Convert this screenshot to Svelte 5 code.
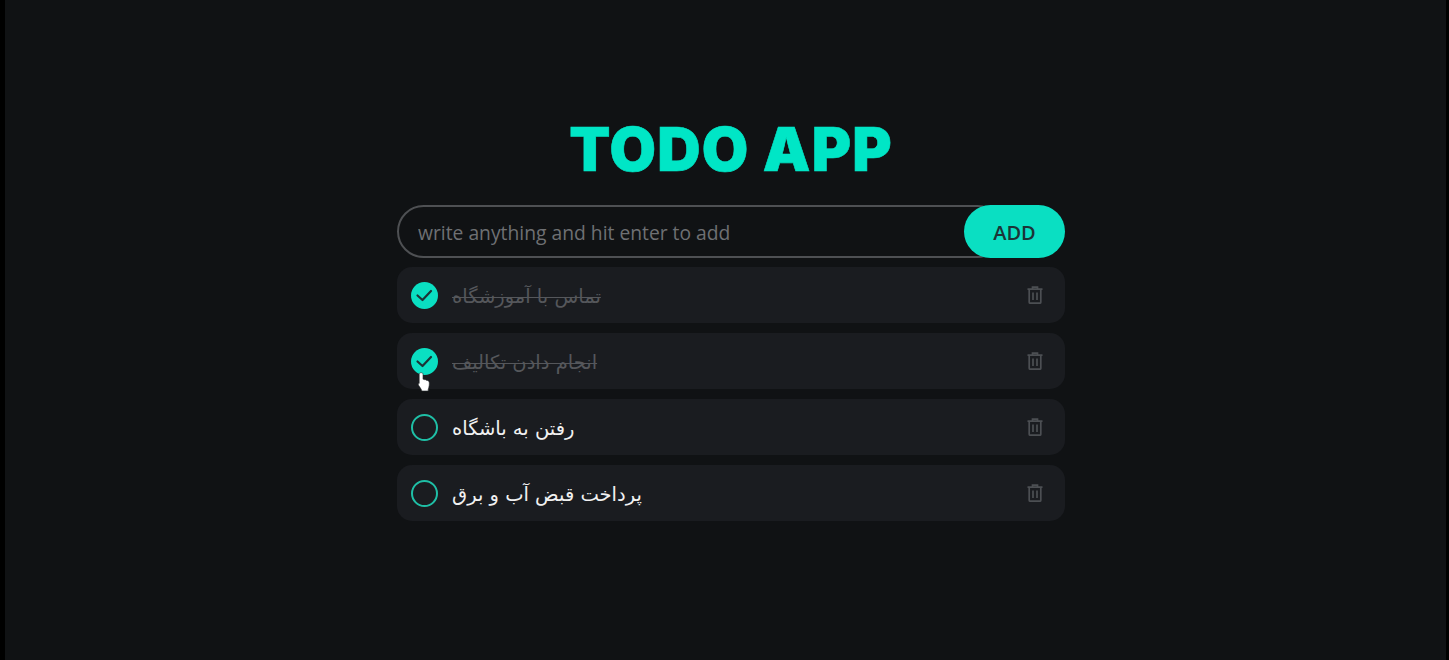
<script>
  let todos = $state([
    { id: 1, text: 'تماس با آموزشگاه', done: true },
    { id: 2, text: 'انجام دادن تکالیف', done: true },
    { id: 3, text: 'رفتن به باشگاه', done: false },
    { id: 4, text: 'پرداخت قبض آب و برق', done: false }
  ]);
  let draft = $state('');

  function add() {
    if (!draft.trim()) return;
    todos.push({ id: Date.now(), text: draft, done: false });
    draft = '';
  }
</script>

<div class="page">
  <main class="app">
    <h1>TODO APP</h1>
    <form class="add" onsubmit={(e) => { e.preventDefault(); add(); }}>
      <input placeholder="write anything and hit enter to add" bind:value={draft} />
      <button type="submit">ADD</button>
    </form>
    <ul>
      {#each todos as todo, i (todo.id)}
        <li class:done={todo.done}>
          <button class="check" aria-label="toggle" onclick={() => (todo.done = !todo.done)}>
            {#if todo.done}
              <svg viewBox="0 0 27 27" width="27" height="27">
                <path d="M6.500 13.500L11.500 18L20 9" fill="none" stroke="#1c3436" stroke-width="2.200" stroke-linecap="round" stroke-linejoin="round" />
              </svg>
            {/if}
            {#if i === 1}
              <svg class="cursor" viewBox="0 0 12 20" width="12" height="20">
                <path d="M1.200 2.200C1.200 .2 5 .2 5 2.200V7.200C5.800 7 6.400 7.200 6.800 7.800C7.500 7.500 8.300 7.800 8.700 8.500C9.700 8.300 11 9 11.200 10.200C11.500 12 11.200 14.500 10.200 17.500V19H3.800L3.300 17.500C2.600 15.900 1.300 14.800 .6 13.300C.1 12 .4 11.200 1.200 11.400Z" fill="#fff" stroke="#24282a" stroke-width=".6" />
              </svg>
            {/if}
          </button>
          <span class="text" dir="auto">{todo.text}</span>
          <button class="del" aria-label="delete" onclick={() => todos.splice(i, 1)}>
            <svg viewBox="0 0 16 18" width="16" height="18" fill="none" stroke="#4c4f53" stroke-width="1.700">
              <path d="M0.500 3.200H15.500M5.500 3V1.200H10.500V3M2.200 3.200V16.200C2.200 16.800 2.600 17.200 3.200 17.200H12.800C13.400 17.200 13.800 16.800 13.800 16.200V3.200" />
              <path d="M6 6.500V14M10 6.500V14" />
            </svg>
          </button>
        </li>
      {/each}
    </ul>
  </main>
</div>

<style>
  :global(body) {
    background: #000;
    font-family: "Open Sans", "Noto Sans", sans-serif;
  }
  .page {
    height: 660px;
    margin: 0 3px 0 5px;
    background: #101214;
    display: flex;
    justify-content: center;
    box-sizing: border-box;
    padding-left: 11px;
    overflow: hidden;
  }
  .app {
    width: 668px;
    padding-top: 111px;
  }
  h1 {
    margin: 0 0 17px;
    text-align: center;
    font-family: Inter, sans-serif;
    font-size: 60px;
    font-weight: 900;
    line-height: 77px;
    letter-spacing: 1.200px;
    -webkit-text-stroke: 0.600px #00e6c6;
    color: #00e6c6;
  }
  .add {
    display: flex;
    height: 53px;
    margin-bottom: 9px;
  }
  input {
    flex: 1;
    min-width: 0;
    box-sizing: border-box;
    height: 53px;
    margin-right: -40px;
    padding: 2px 60px 0 19px;
    background: transparent;
    border: 2px solid #4e5053;
    border-radius: 27px;
    color: #eee;
    font: 19.300px "Open Sans", sans-serif;
    outline: none;
  }
  input::placeholder {
    color: #6e7073;
    opacity: 1;
  }
  .add button {
    width: 101px;
    border: none;
    border-radius: 27px;
    background: #0adfc2;
    color: #1c3436;
    font: 600 20px "Open Sans", sans-serif;
    z-index: 1;
    padding: 2px 0 0;
  }
  ul {
    list-style: none;
    margin: 0;
    padding: 0;
    display: flex;
    flex-direction: column;
    gap: 10px;
  }
  li {
    height: 56px;
    box-sizing: border-box;
    padding: 0 22px 0 14px;
    display: flex;
    align-items: center;
    background: #1a1c20;
    border-radius: 15px;
  }
  .check {
    position: relative;
    width: 27px;
    height: 27px;
    padding: 0;
    box-sizing: border-box;
    background: transparent;
    border: 2px solid #1fbfa6;
    border-radius: 50%;
    flex: none;
  }
  .done .check {
    background: #0adfc2;
    border: none;
  }
  .check svg {
    display: block;
  }
  .check .cursor {
    position: absolute;
    left: 7px;
    top: 24px;
  }
  .text {
    flex: 1;
    margin: 3px 0 0 14px;
    font: 19.500px "DejaVu Sans", sans-serif;
    color: #f1f1f1;
    text-align: left;
    unicode-bidi: plaintext;
  }
  .done .text {
    color: #55575b;
    text-decoration: line-through;
    text-decoration-thickness: 1px;
  }
  .del {
    background: none;
    border: none;
    padding: 0;
    height: 18px;
    margin-top: -1px;
  }
  .del svg {
    display: block;
  }
</style>
